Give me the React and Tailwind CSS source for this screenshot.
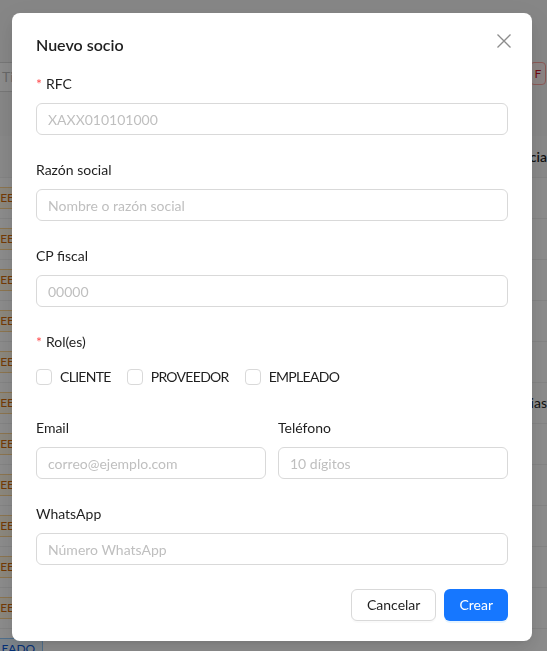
const rows = [
  { tag: "PROVEEDOR", color: "orange", right: "" },
  { tag: "PROVEEDOR", color: "orange", right: "" },
  { tag: "PROVEEDOR", color: "orange", right: "" },
  { tag: "PROVEEDOR", color: "orange", right: "" },
  { tag: "PROVEEDOR", color: "orange", right: "" },
  { tag: "PROVEEDOR", color: "orange", right: "Guias" },
  { tag: "PROVEEDOR", color: "orange", right: "" },
  { tag: "PROVEEDOR", color: "orange", right: "" },
  { tag: "PROVEEDOR", color: "orange", right: "" },
  { tag: "PROVEEDOR", color: "orange", right: "" },
  { tag: "PROVEEDOR", color: "orange", right: "" },
  { tag: "EMPLEADO", color: "blue", right: "" },
]

const Field = ({ label, required, placeholder }) => (
  <div className="mb-6">
    <div className="mb-2 flex h-[22px] items-center text-sm leading-[22px] text-[#1f1f1f]">
      {required && <span className="mr-1 text-sm text-[#ff4d4f]">*</span>}
      {label}
    </div>
    <input
      type="text"
      placeholder={placeholder}
      className="block h-8 w-full rounded-md border border-[#d9d9d9] bg-white px-[11px] text-sm text-[#1f1f1f] placeholder-[#bfbfbf] outline-none"
    />
  </div>
)

const Check = ({ label }) => (
  <label className="mr-2 flex items-center">
    <span className="h-4 w-4 rounded-[4px] border border-[#d9d9d9] bg-white" />
    <span className="px-2 text-sm leading-[22px] tracking-[-0.7px] text-[#1f1f1f]">{label}</span>
  </label>
)

export default function App() {
  return (
    <div className="relative h-[651px] w-[547px] overflow-hidden bg-[#f5f5f5] font-['Segoe_UI','Lato',sans-serif]">
      {/* page behind the dialog */}
      <div className="flex h-[30px] items-center mt-[62px]">
        <div className="-ml-[10px] h-[30px] w-[300px] rounded-md border border-[#d9d9d9] bg-white px-[11px] text-sm leading-[28px] text-[#bfbfbf]">
          Tipo
        </div>
        <span className="ml-auto mr-px h-[23px] w-[16px] self-start rounded border border-[#ffa39e] bg-[#fff1f0] text-center text-xs leading-[21px] text-[#cf1322]">
          F
        </span>
      </div>

      <div className="mt-[44px] bg-white">
        <div className="flex h-[42px] items-center justify-end border-b border-[#f0f0f0] bg-[#fafafa] text-sm font-semibold text-[#1f1f1f]">
          Referencia
        </div>
        {rows.map((r, i) => (
          <div key={i} className="flex h-[41px] items-center border-b border-[#f0f0f0] text-sm text-[#1f1f1f]">
            <span
              className={
                r.color === "orange"
                  ? "-ml-[40px] rounded border border-[#ffd591] bg-[#fff7e6] px-[7px] text-xs leading-[20px] text-[#d46b08]"
                  : "-ml-[38px] rounded border border-[#91caff] bg-[#e6f4ff] px-[7px] text-xs leading-[20px] text-[#0958d9]"
              }
            >
              {r.tag}
            </span>
            <span className="ml-auto">{r.right}</span>
          </div>
        ))}
      </div>

      {/* mask */}
      <div className="fixed inset-0 bg-black/45" />

      {/* dialog */}
      <div className="fixed inset-0 flex items-start pt-[13px] pl-[12px]">
        <div className="relative w-[520px] rounded-lg bg-white px-6 py-5 shadow-[0_6px_16px_0_rgba(0,0,0,0.08),0_3px_6px_-4px_rgba(0,0,0,0.12),0_9px_28px_8px_rgba(0,0,0,0.05)]">
          <button className="absolute right-[17px] top-[17px] flex h-[22px] w-[22px] items-center justify-center">
            <svg width="14" height="14" viewBox="0 0 14 14" fill="none" stroke="#8c8c8c" strokeWidth="1.3">
              <path d="M0.5 0.5 L13.5 13.5 M13.5 0.5 L0.5 13.5" />
            </svg>
          </button>

          <div className="text-base font-semibold leading-6 text-[#1f1f1f]">Nuevo socio</div>

          <form className="mt-4">
            <Field label="RFC" required placeholder="XAXX010101000" />
            <Field label="Razón social" placeholder="Nombre o razón social" />
            <Field label="CP fiscal" placeholder="00000" />

            <div className="mb-6">
              <div className="mb-2 flex h-[22px] items-center text-sm leading-[22px] text-[#1f1f1f]">
                <span className="mr-1 text-sm text-[#ff4d4f]">*</span>
                Rol(es)
              </div>
              <div className="flex h-8 items-center">
                <Check label="CLIENTE" />
                <Check label="PROVEEDOR" />
                <Check label="EMPLEADO" />
              </div>
            </div>

            <div className="grid grid-cols-2 gap-x-3">
              <Field label="Email" placeholder="correo@ejemplo.com" />
              <Field label="Teléfono" placeholder="10 dígitos" />
            </div>

            <Field label="WhatsApp" placeholder="Número WhatsApp" />
          </form>

          <div className="flex justify-end gap-2">
            <button className="h-8 rounded-md border border-[#d9d9d9] bg-white px-[15px] text-sm text-[#1f1f1f] shadow-[0_2px_0_rgba(0,0,0,0.02)]">
              Cancelar
            </button>
            <button className="h-8 rounded-md bg-[#1677ff] px-[15px] text-sm text-white shadow-[0_2px_0_rgba(5,145,255,0.1)]">
              Crear
            </button>
          </div>
        </div>
      </div>
    </div>
  )
}
